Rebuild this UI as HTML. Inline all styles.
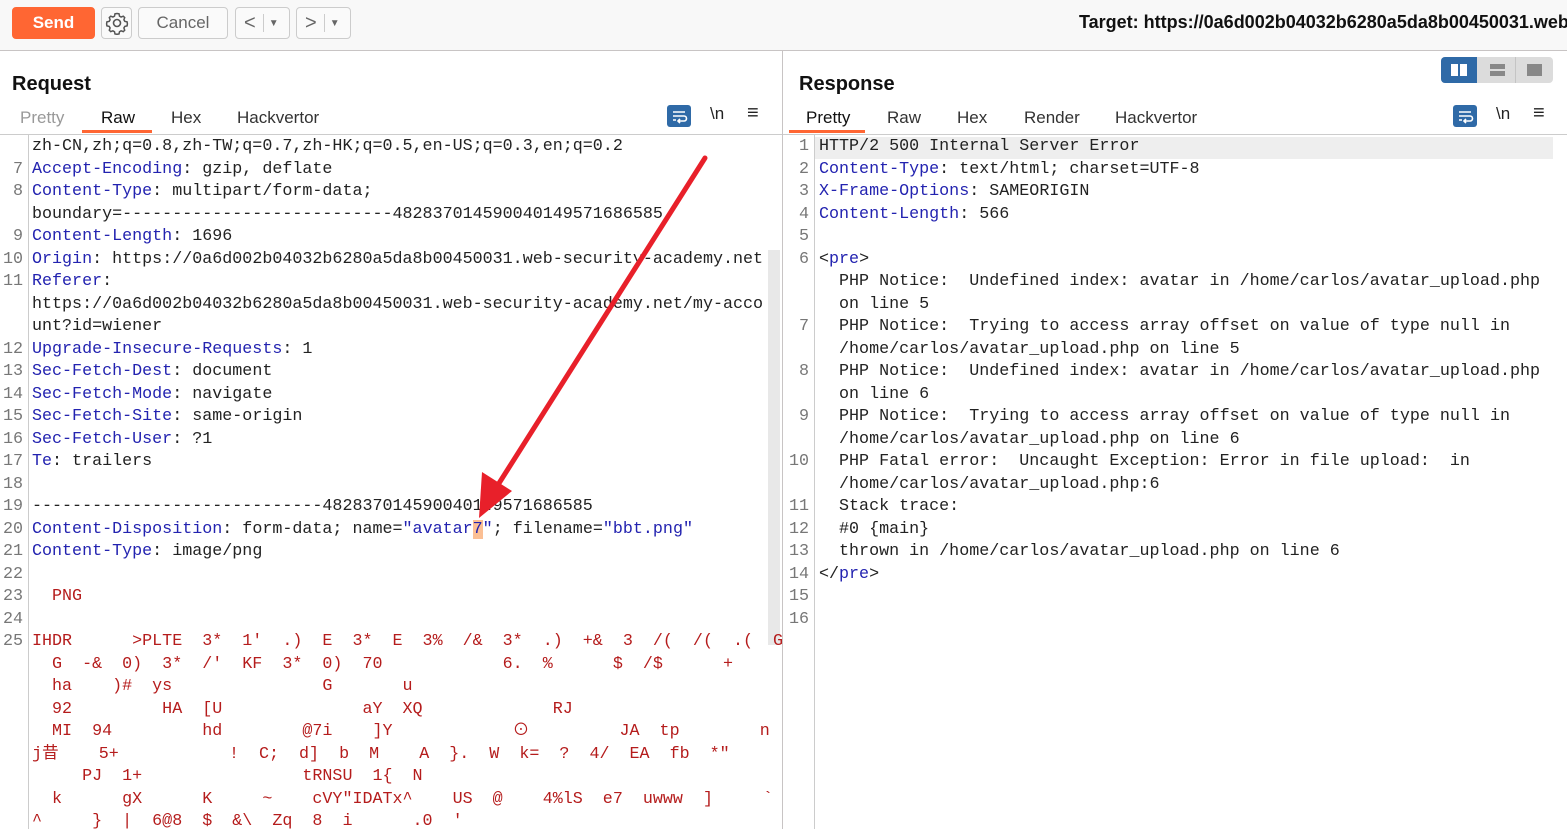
<!DOCTYPE html>
<html><head><meta charset="utf-8"><style>
*{margin:0;padding:0;box-sizing:border-box}
body{width:1567px;height:829px;overflow:hidden;background:#fff;font-family:"Liberation Sans","Noto Sans CJK SC",sans-serif;position:relative;color:#222}
.abs{position:absolute}
.top{left:0;top:0;width:1567px;height:51px;background:#f8f8f8;border-bottom:1px solid #c8c4c4}
.btn{position:absolute;top:7px;height:32px;border:1px solid #ccc;border-radius:4px;background:#fafafa;color:#666;font-size:17px;display:flex;align-items:center;justify-content:center}
.h{font-weight:bold;font-size:20px;color:#111}
.tab{position:absolute;top:108px;font-size:17px;color:#333}
.code{position:absolute;font-family:"Liberation Mono","Noto Sans CJK SC",monospace;font-size:16.7px;line-height:22.5px;white-space:pre}
.ln{color:#777;text-align:right}
.k{color:#2323b0}.r{color:#b51c1c}.v{color:#2323b0}
</style></head><body>
<div class="abs top"></div>
<div class="btn" style="left:12px;width:83px;background:#ff6633;border-color:#ff6633;color:#fff;font-weight:bold">Send</div>
<div class="btn" style="left:101px;width:31px"><svg width="24" height="24" viewBox="0 0 24 24"><circle cx="12" cy="12" r="3.5" fill="none" stroke="#555" stroke-width="1.6"/><path d="M12 2.5l2 .3.5 2.3 1.6.9 2.2-.8 1.4 1.4-.8 2.2.9 1.6 2.3.5.3 2-.3 2-2.3.5-.9 1.6.8 2.2-1.4 1.4-2.2-.8-1.6.9-.5 2.3-2 .3-2-.3-.5-2.3-1.6-.9-2.2.8-1.4-1.4.8-2.2-.9-1.6-2.3-.5-.3-2 .3-2 2.3-.5.9-1.6-.8-2.2 1.4-1.4 2.2.8 1.6-.9.5-2.3z" fill="none" stroke="#555" stroke-width="1.5"/></svg></div>
<div class="btn" style="left:138px;width:90px">Cancel</div>
<div class="btn" style="left:235px;width:55px;justify-content:flex-start;padding-left:8px;font-size:20px">&lt;<span style="border-left:1px solid #ccc;height:18px;margin:0 5px 0 7px"></span><span style="font-size:10px">▼</span></div>
<div class="btn" style="left:296px;width:55px;justify-content:flex-start;padding-left:8px;font-size:20px">&gt;<span style="border-left:1px solid #ccc;height:18px;margin:0 5px 0 7px"></span><span style="font-size:10px">▼</span></div>
<div class="abs" style="left:1079px;top:12px;font-size:18px;font-weight:bold;color:#111;white-space:nowrap">Target: https://0a6d002b04032b6280a5da8b00450031.web</div>

<div class="abs" style="left:782px;top:51px;width:1px;height:778px;background:#c8c4c4"></div>

<div class="abs h" style="left:12px;top:73px">Request</div>
<div class="tab" style="left:20px;color:#999">Pretty</div>
<div class="tab" style="left:101px;color:#111">Raw</div>
<div class="abs" style="left:82px;top:130px;width:70px;height:3px;background:#ff6633"></div>
<div class="tab" style="left:171px">Hex</div>
<div class="tab" style="left:237px">Hackvertor</div>
<div class="abs" style="left:667px;top:105px;width:24px;height:22px;background:#2f6aa7;border-radius:3px"><svg width="24" height="22"><path d="M6 7h12M6 11h11a2.5 2.5 0 010 5h-5M6 15h3M13 14l-2 2 2 2" stroke="#fff" stroke-width="1.6" fill="none"/></svg></div>
<div class="abs" style="left:710px;top:104px;font-size:17px">\n</div>
<div class="abs" style="left:747px;top:102px;font-size:20px">≡</div>
<div class="abs" style="left:0;top:134px;width:782px;height:1px;background:#ccc"></div>
<div class="abs" style="left:28px;top:135px;width:1px;height:694px;background:#ccc"></div>
<div class="abs" style="left:768px;top:250px;width:12px;height:395px;background:#e8e8e8"></div>

<div class="code ln" style="left:0;top:136px;width:23px">
7
8

9
10
11


12
13
14
15
16
17
18
19
20
21
22
23
24
25</div>
<div class="code" style="left:32px;top:136px">zh-CN,zh;q=0.8,zh-TW;q=0.7,zh-HK;q=0.5,en-US;q=0.3,en;q=0.2
<span class="k">Accept-Encoding</span>: gzip, deflate
<span class="k">Content-Type</span>: multipart/form-data;
boundary=---------------------------482837014590040149571686585
<span class="k">Content-Length</span>: 1696
<span class="k">Origin</span>: https://0a6d002b04032b6280a5da8b00450031.web-security-academy.net
<span class="k">Referer</span>:
https://0a6d002b04032b6280a5da8b00450031.web-security-academy.net/my-acco
unt?id=wiener
<span class="k">Upgrade-Insecure-Requests</span>: 1
<span class="k">Sec-Fetch-Dest</span>: document
<span class="k">Sec-Fetch-Mode</span>: navigate
<span class="k">Sec-Fetch-Site</span>: same-origin
<span class="k">Sec-Fetch-User</span>: ?1
<span class="k">Te</span>: trailers

-----------------------------482837014590040149571686585
<span class="k">Content-Disposition</span>: form-data; name=<span class="v">"avatar<span style="background:#fbbf94">7</span>"</span>; filename=<span class="v">"bbt.png"</span>
<span class="k">Content-Type</span>: image/png

<span class="r">  PNG</span>

<span class="r">IHDR      >PLTE  3*  1'  .)  E  3*  E  3%  /&amp;  3*  .)  +&amp;  3  /(  /(  .(  G
  G  -&amp;  0)  3*  /'  KF  3*  0)  70            6.  %      $  /$      +
  ha    )#  ys               G       u
  92         HA  [U              aY  XQ             RJ
  MI  94         hd        @7i    ]Y            ⊙         JA  tp        n
j昔    5+           !  C;  d]  b  M    A  }.  W  k=  ?  4/  EA  fb  *"
     PJ  1+                tRNSU  1{  N
  k      gX      K     ~    cVY"IDATx^    US  @    4%lS  e7  uwww  ]     `
^     }  |  6@8  $  &amp;\  Zq  8  i      .0  '</span></div>

<div class="abs h" style="left:799px;top:73px">Response</div>
<div class="abs" style="left:1441px;top:57px;width:112px;height:26px;background:#dcdcdc;border-radius:4px"></div>
<div class="abs" style="left:1441px;top:57px;width:36px;height:26px;background:#2f6aa7;border-radius:4px 0 0 4px"></div>
<div class="abs" style="left:1451px;top:64px;width:7px;height:12px;background:#fff"></div>
<div class="abs" style="left:1460px;top:64px;width:7px;height:12px;background:#fff"></div>
<div class="abs" style="left:1490px;top:64px;width:15px;height:5px;background:#888"></div>
<div class="abs" style="left:1490px;top:71px;width:15px;height:5px;background:#888"></div>
<div class="abs" style="left:1515px;top:57px;width:1px;height:26px;background:#c4c4c4"></div>
<div class="abs" style="left:1527px;top:64px;width:15px;height:12px;background:#888"></div>
<div class="tab" style="left:806px;color:#111">Pretty</div>
<div class="abs" style="left:789px;top:130px;width:76px;height:3px;background:#ff6633"></div>
<div class="tab" style="left:887px">Raw</div>
<div class="tab" style="left:957px">Hex</div>
<div class="tab" style="left:1024px">Render</div>
<div class="tab" style="left:1115px">Hackvertor</div>
<div class="abs" style="left:1453px;top:105px;width:24px;height:22px;background:#2f6aa7;border-radius:3px"><svg width="24" height="22"><path d="M6 7h12M6 11h11a2.5 2.5 0 010 5h-5M6 15h3M13 14l-2 2 2 2" stroke="#fff" stroke-width="1.6" fill="none"/></svg></div>
<div class="abs" style="left:1496px;top:104px;font-size:17px">\n</div>
<div class="abs" style="left:1533px;top:102px;font-size:20px">≡</div>
<div class="abs" style="left:783px;top:134px;width:784px;height:1px;background:#ccc"></div>
<div class="abs" style="left:814px;top:135px;width:1px;height:694px;background:#ccc"></div>
<div class="abs" style="left:815px;top:137px;width:738px;height:22px;background:#eee"></div>
<div class="code ln" style="left:783px;top:136px;width:26px">1
2
3
4
5
6


7

8

9

10

11
12
13
14
15
16</div>
<div class="code" style="left:819px;top:136px">HTTP/2 500 Internal Server Error
<span class="k">Content-Type</span>: text/html; charset=UTF-8
<span class="k">X-Frame-Options</span>: SAMEORIGIN
<span class="k">Content-Length</span>: 566

&lt;<span class="v">pre</span>&gt;
  PHP Notice:  Undefined index: avatar in /home/carlos/avatar_upload.php
  on line 5
  PHP Notice:  Trying to access array offset on value of type null in
  /home/carlos/avatar_upload.php on line 5
  PHP Notice:  Undefined index: avatar in /home/carlos/avatar_upload.php
  on line 6
  PHP Notice:  Trying to access array offset on value of type null in
  /home/carlos/avatar_upload.php on line 6
  PHP Fatal error:  Uncaught Exception: Error in file upload:  in
  /home/carlos/avatar_upload.php:6
  Stack trace:
  #0 {main}
  thrown in /home/carlos/avatar_upload.php on line 6
&lt;/<span class="v">pre</span>&gt;</div>

<svg class="abs" style="left:0;top:0" width="1567" height="829"><line x1="705" y1="158" x2="496" y2="488" stroke="#e8202a" stroke-width="5" stroke-linecap="round"/><polygon points="479,518 482,472 512,491" fill="#e8202a"/></svg>
</body></html>
